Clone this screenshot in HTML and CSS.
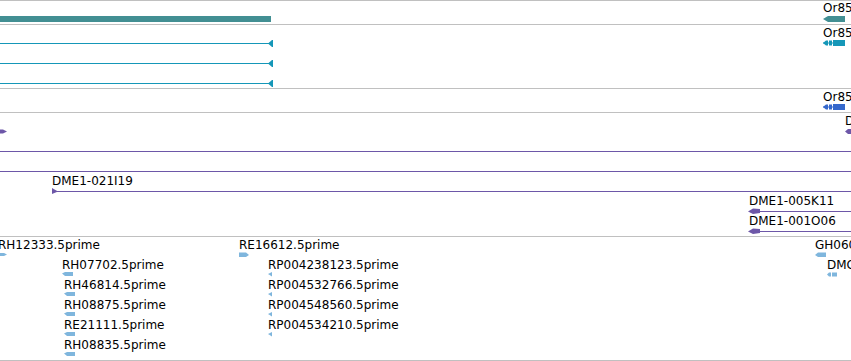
FILE: index.html
```html
<!DOCTYPE html>
<html lang="en">

<head>
    <meta charset="UTF-8">
    <meta name="viewport" content="width=device-width, initial-scale=1.0">
    <title>Track view</title>
    <link rel="stylesheet" href="styles.css">
</head>

<body>
    <div class="tracks">
        <!-- gene -->
        <div class="track track-gene">
            <svg class="canvas" width="851" height="23">
                <rect x="0" y="15" width="271" height="6" />
                <polygon points="823,18 828,15 845,15 845,21 828,21" />
            </svg>
            <div class="label" style="left:823px;top:0px">Or85b</div>
        </div>

        <!-- mRNA -->
        <div class="track track-mrna">
            <svg class="canvas" width="851" height="63">
                <rect x="0" y="18" width="269" height="1" />
                <polygon points="268,18.5 272,15 273,15 273,22 272,22" />
                <rect x="0" y="38" width="269" height="1" />
                <polygon points="268,38.5 272,35 273,35 273,42 272,42" />
                <rect x="0" y="58" width="269" height="1" />
                <polygon points="268,58.5 272,55 273,55 273,62 272,62" />

                <rect x="823" y="17.5" width="22" height="1" />
                <polygon points="823,18 826,15.5 828,15.5 828,20.5 826,20.5" />
                <rect x="829" y="15.5" width="3" height="5" />
                <rect x="833" y="15" width="12" height="6" />
            </svg>
            <div class="label" style="left:823px;top:1px">Or85b</div>
        </div>

        <!-- CDS -->
        <div class="track track-cds">
            <svg class="canvas" width="851" height="23">
                <rect x="823" y="17.5" width="22" height="1" />
                <polygon points="823,18 826,15.5 828,15.5 828,20.5 826,20.5" />
                <rect x="829" y="15.5" width="3" height="5" />
                <rect x="833" y="15" width="12" height="6" />
            </svg>
            <div class="label" style="left:823px;top:1px">Or85b</div>
        </div>

        <!-- BAC clones -->
        <div class="track track-bac">
            <svg class="canvas" width="851" height="123">
                <polygon points="0,16.5 3,16.5 7,18.5 3,20.5 0,20.5" />
                <polygon points="845,18.5 848,16 851,16 851,21 848,21" />

                <rect x="0" y="38" width="851" height="1" />
                <rect x="0" y="58" width="851" height="1" />

                <rect x="52" y="78" width="799" height="1" />
                <polygon points="52,75 58,78.5 52,81" />

                <rect x="749" y="98" width="102" height="1" />
                <polygon points="748,98.5 753,95.5 760,96 760,100 753,101" />

                <rect x="749" y="118" width="102" height="1" />
                <polygon points="748,118.5 753,115.5 760,116 760,120 753,121" />
            </svg>
            <div class="label" style="left:845px;top:1px">DME1-017A05</div>
            <div class="label" style="left:52px;top:61px">DME1-021I19</div>
            <div class="label" style="left:749px;top:81px">DME1-005K11</div>
            <div class="label" style="left:749px;top:101px">DME1-001O06</div>
        </div>

        <!-- ESTs -->
        <div class="track track-est">
            <svg class="canvas" width="851" height="123">
                <polygon points="0,16 4,16 7,17.5 4,19 0,19" />
                <polygon points="239,15.5 246,15.5 249,18 246,20 239,20" />
                <polygon points="815,18 818,15.5 826,15.5 826,20 818,20" />

                <polygon points="62,36.5 65,35 73,35 73,39 65,39" />
                <polygon points="268,37 272,35 272,39.5" />
                <polygon points="827,37.5 829,35.5 831,35.5 831,39.5 829,39.5" />
                <rect x="832" y="35.5" width="5" height="4" />

                <polygon points="64,56.5 67,55 75,55 75,59 67,59" />
                <polygon points="268,57 272,55 272,59.5" />

                <polygon points="64,76.5 67,75 75,75 75,79 67,79" />
                <polygon points="268,77 272,75 272,79.5" />

                <polygon points="64,96.5 67,95 75,95 75,99 67,99" />
                <polygon points="268,97 272,95 272,99.5" />

                <polygon points="64,116.5 67,115 75,115 75,119 67,119" />
            </svg>
            <div class="label" style="left:-2px;top:1px">RH12333.5prime</div>
            <div class="label" style="left:239px;top:1px">RE16612.5prime</div>
            <div class="label" style="left:815px;top:1px">GH06041.5prime</div>
            <div class="label" style="left:62px;top:21px">RH07702.5prime</div>
            <div class="label" style="left:268px;top:21px">RP004238123.5prime</div>
            <div class="label" style="left:827px;top:21px">DMC0112.5prime</div>
            <div class="label" style="left:64px;top:41px">RH46814.5prime</div>
            <div class="label" style="left:268px;top:41px">RP004532766.5prime</div>
            <div class="label" style="left:64px;top:61px">RH08875.5prime</div>
            <div class="label" style="left:268px;top:61px">RP004548560.5prime</div>
            <div class="label" style="left:64px;top:81px">RE21111.5prime</div>
            <div class="label" style="left:268px;top:81px">RP004534210.5prime</div>
            <div class="label" style="left:64px;top:101px">RH08835.5prime</div>
        </div>
    </div>
</body>
</html>
```

FILE: styles.css
```css
body {
    margin: 0;
    font-family: "DejaVu Sans", sans-serif;
    font-size: 12px;
    color: #000;
    background: #fff;
    overflow: hidden;
}

.tracks {
    width: 851px;
    display: flex;
    flex-direction: column;
}

.track {
    position: relative;
    overflow: hidden;
    border-top: 1px solid #c0c0c0;
}

.track:last-child {
    border-bottom: 1px solid #c0c0c0;
}

.canvas {
    display: block;
}

.label {
    position: absolute;
    line-height: 14px;
    white-space: nowrap;
}

.track-gene .canvas {
    fill: #428f93;
}

.track-mrna .canvas {
    fill: #1597b8;
}

.track-cds .canvas {
    fill: #3568cc;
}

.track-bac .canvas {
    fill: #6d57a8;
}

.track-est .canvas {
    fill: #7fb6dd;
}
```
